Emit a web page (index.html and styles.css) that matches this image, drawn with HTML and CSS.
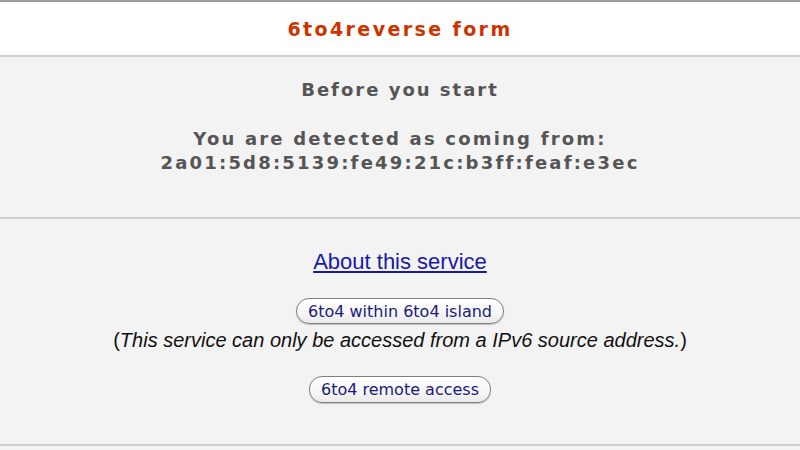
FILE: index.html
```html
<!DOCTYPE html>
<html>
<head>
<meta charset="utf-8">
<link rel="stylesheet" href="styles.css">
</head>
<body>
<div class="page">
  <header class="head">
    <h1 class="title">6to4reverse form</h1>
  </header>
  <section class="intro">
    <h2 class="sub">Before you start</h2>
    <p class="detect">You are detected as coming from:<br>2a01:5d8:5139:fe49:21c:b3ff:feaf:e3ec</p>
  </section>
  <section class="actions">
    <a class="about" href="#">About this service</a>
    <button class="btn btn-first">6to4 within 6to4 island</button>
    <p class="note">(<i>This service can only be accessed from a IPv6 source address.</i>)</p>
    <button class="btn btn-second">6to4 remote access</button>
  </section>
</div>
</body>
</html>
```
FILE: styles.css
```css
html, body { margin: 0; padding: 0; }
body {
  background: #f3f3f3;
  font-family: "DejaVu Sans", Verdana, sans-serif;
  width: 800px;
  height: 450px;
  overflow: hidden;
}
.page {
  border-top: 2px solid #9a9a9a;
}
.head {
  background: #ffffff;
  height: 53px;
  display: flex;
  align-items: center;
  justify-content: center;
  border-bottom: 2px solid #cfcfcf;
}
.title {
  margin: 0;
  font-size: 19px;
  font-weight: bold;
  color: #cc3300;
  letter-spacing: 2.4px;
}
.intro {
  height: 162px;
  border-bottom: 2px solid #cfcfcf;
  text-align: center;
  color: #555555;
  padding-top: 1px;
  box-sizing: border-box;
}
.sub {
  margin: 20px 0 0;
  font-size: 18px;
  line-height: 24px;
  font-weight: bold;
  letter-spacing: 2px;
}
.detect {
  margin: 25px 0 0;
  font-size: 18px;
  line-height: 24px;
  font-weight: bold;
  letter-spacing: 2.2px;
}
.actions {
  height: 227px;
  border-bottom: 2px solid #cfcfcf;
  display: flex;
  flex-direction: column;
  align-items: center;
  box-sizing: border-box;
  padding-top: 31px;
}
.about {
  font-family: "Liberation Sans", Arial, sans-serif;
  font-size: 22px;
  color: #1a1aa6;
  text-decoration: underline;
  line-height: 24px;
}
.btn {
  font-family: "DejaVu Sans", Verdana, sans-serif;
  font-size: 16px;
  color: #1a1a80;
  background: linear-gradient(#ffffff, #f6f6f6 60%, #e9e9e9);
  border: 1px solid #7f7f7f;
  border-radius: 13px;
  padding: 0 11px;
  box-shadow: 0 1px 1px rgba(0,0,0,0.2);
}
.btn-first { margin-top: 24px; height: 26px; }
.note {
  margin: 5px 0 0;
  font-family: "Liberation Sans", Arial, sans-serif;
  font-size: 20px;
  line-height: 22px;
  color: #111111;
}
.btn-second { margin-top: 25px; height: 27px; }
```
